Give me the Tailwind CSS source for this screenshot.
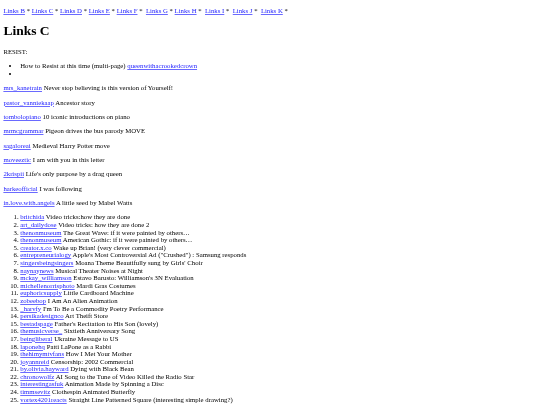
<!DOCTYPE html>
<html lang="en">
  <head>
    <meta charset="UTF-8" />
    <title>Links C</title>
    <script src="https://cdn.jsdelivr.net/npm/@tailwindcss/browser@4"></script>
  </head>
  <body class="h-[405px] overflow-hidden bg-white px-[3.375px] font-['Liberation_Serif',serif] text-[6.75px] leading-[7.594px] text-black blur-[0.3px]">
    <p class="my-[6.75px] whitespace-pre [&_a]:text-[#2222ff] [&_a]:underline [&_a]:decoration-[#6a6aff]"><a href="#">Links B</a> * <a href="#">Links C</a> * <a href="#">Links D</a> * <a href="#">Links E</a> * <a href="#">Links F</a> *  <a href="#">Links G</a> * <a href="#">Links H</a> *  <a href="#">Links I</a> *  <a href="#">Links J</a> *  <a href="#">Links K</a> *</p>
    <h1 class="my-[9.05px] text-[13.5px] leading-[15.61px] font-bold">Links C</h1>
    <p class="my-[6.75px]">RESIST:</p>
    <ul class="my-[6.75px] list-disc pl-[16.875px]">
      <li>How to Resist at this time (multi-page) <a class="text-[#2222ff] underline decoration-[#6a6aff]" href="#">queenwithacrookedcrown</a></li>
      <li></li>
    </ul>
    <div class="[&_a]:text-[#2222ff] [&_a]:underline [&_a]:decoration-[#6a6aff] [&_p]:my-[6.75px]">
      <p><a href="#">mrs_kanetrain</a> Never stop believing is this version of Yourself!</p>
      <p><a href="#">pastor_vanniekaap</a> Ancestor story</p>
      <p><a href="#">tombolopiano</a> 10 iconic introductions on piano</p>
      <p><a href="#">mrmcgrammar</a> Pigeon drives the bus parody MOVE</p>
      <p><a href="#">sagaloreai</a> Medieval Harry Potter move</p>
      <p><a href="#">moveeztic</a> I am with you in this letter</p>
      <p><a href="#">2krispii</a> Life's only purpose by a drag queen</p>
      <p><a href="#">harkeofficial</a> I was following</p>
      <p><a href="#">in.love.with.angels</a> A little seed by Mabel Watts</p>
    </div>
    <ol class="my-[6.75px] list-decimal pl-[16.875px] [&_a]:text-[#2222ff] [&_a]:underline [&_a]:decoration-[#6a6aff]">
      <li><a href="#">britchida</a> Video tricks:how they are done</li>
      <li><a href="#">art_dailydose</a> Video tricks: how they are done 2</li>
      <li><a href="#">thenonmuseum</a> The Great Wave: if it were painted by others…</li>
      <li><a href="#">thenonmuseum</a> American Gothic: if it were painted by others…</li>
      <li><a href="#">creator.x.co</a> Wake up Brian! (very clever commercial)</li>
      <li><a href="#">entrepreneurialogy</a> Apple's Most Controversial Ad ("Crushed") : Samsung responds</li>
      <li><a href="#">singersbeingsingers</a> Moana Theme Beautifully sung by Girls' Choir</li>
      <li><a href="#">naynaynews</a> Musical Theater Noises at Night</li>
      <li><a href="#">mckay_williamson</a> Estavo Barusto: Williamson's 3N Evaluation</li>
      <li><a href="#">michellenorrisphoto</a> Mardi Gras Costumes</li>
      <li><a href="#">euphoricsupply</a> Little Cardboard Machine</li>
      <li><a href="#">zobeebop</a> I Am An Alien Animation</li>
      <li><a href="#">_harvfy</a> I'm To Be a Commodity Poetry Performance</li>
      <li><a href="#">persikadesignco</a> Art Theift Store</li>
      <li><a href="#">bestadspage</a> Father's Recitation to His Son (lovely)</li>
      <li><a href="#">themusicverse_</a>  Sixtieth Anniversary Song</li>
      <li><a href="#">beingliberal</a> Ukraine Message to US</li>
      <li><a href="#">laponehq</a> Patti LaPone as a Rabbi</li>
      <li><a href="#">thehimymtvfans</a> How I Met Your Mother</li>
      <li><a href="#">joyannreid</a> Censorship: 2002 Commercial</li>
      <li><a href="#">by.olivia.hayward</a> Dying with Black Bean</li>
      <li><a href="#">chronowolfz</a> AI Song to the Tune of Video Killed the Radio Star</li>
      <li><a href="#">interestingasfuk</a> Animation Made by Spinning a Disc</li>
      <li><a href="#">timmsevitz</a> Clothespin Animated Butterfly</li>
      <li><a href="#">vortex4201reacts</a> Straight Line Patterned Square (interesting simple drawing?)</li>
      <li></li>
    </ol>
  </body>
</html>
